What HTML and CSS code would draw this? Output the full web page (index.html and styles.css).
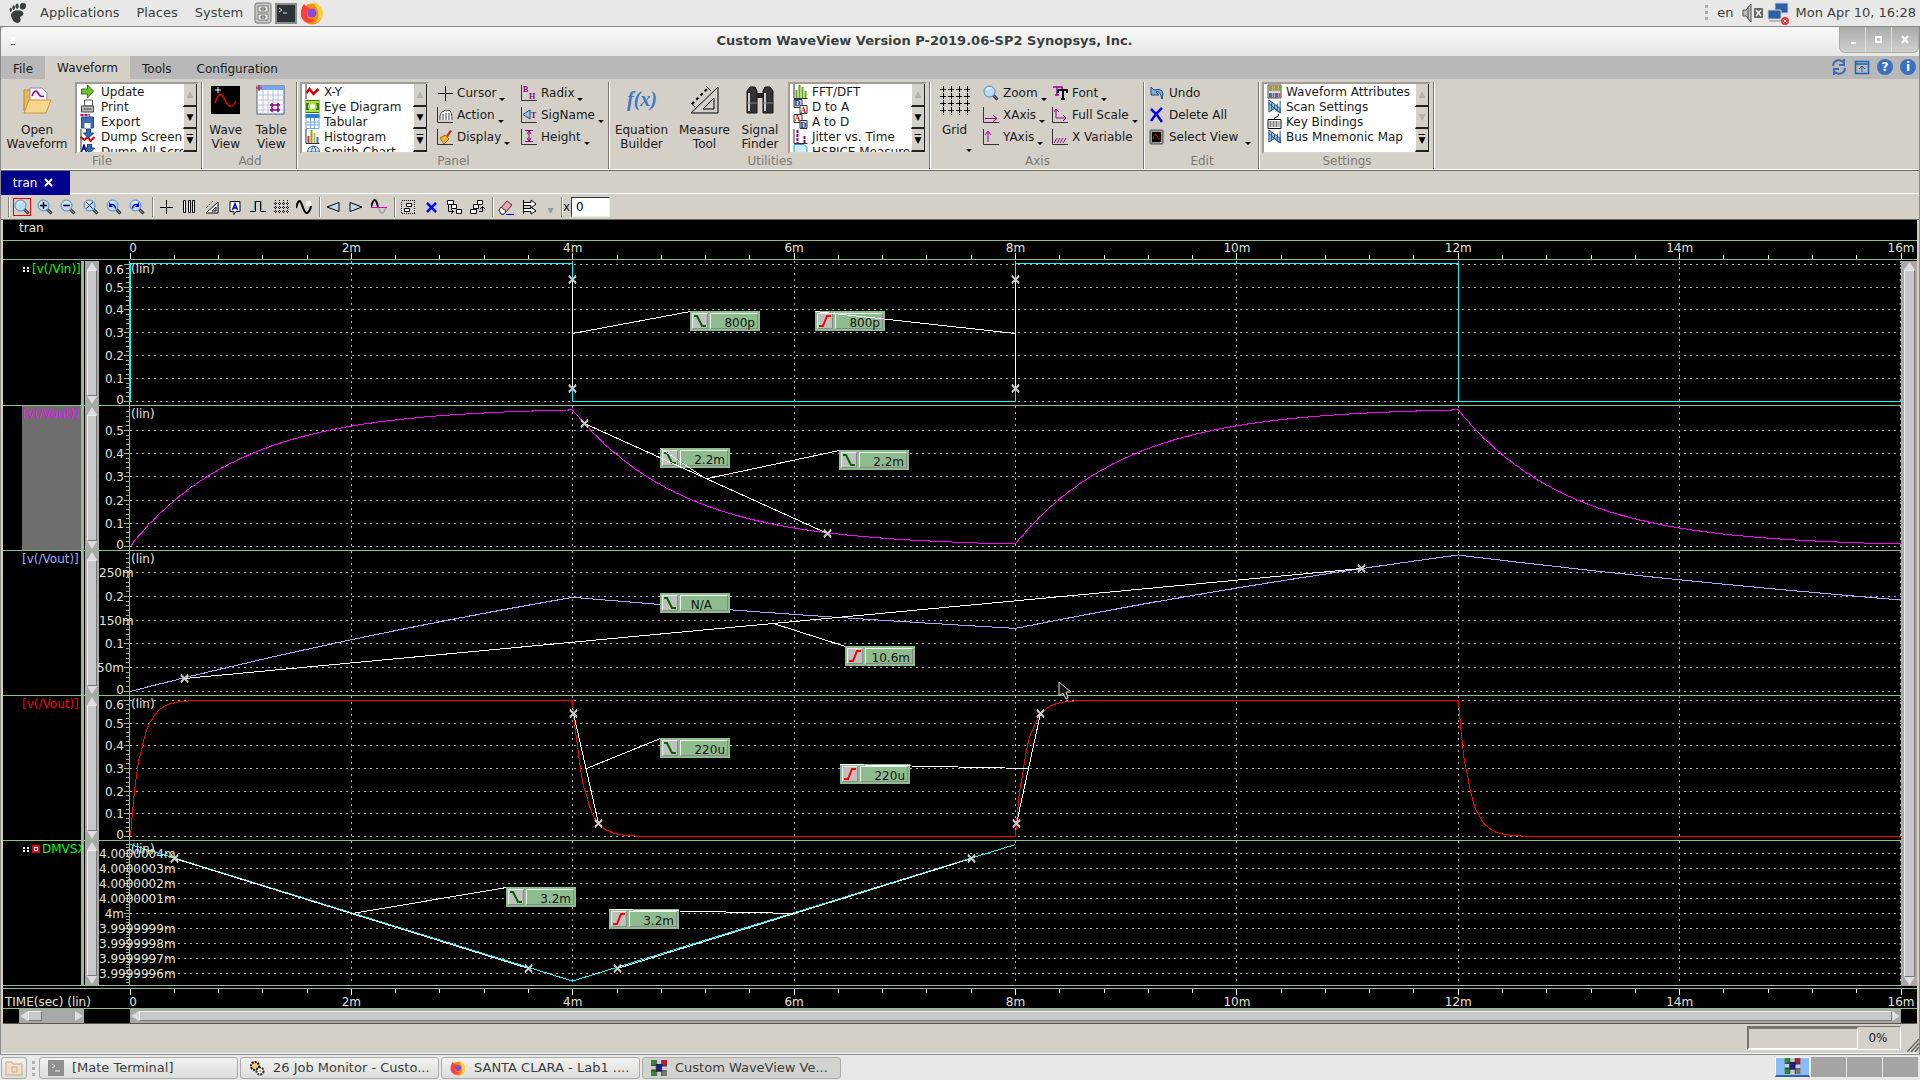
FILE: index.html
```html
<!DOCTYPE html>
<html lang="en">
<head>
<meta charset="utf-8">
<title>Custom WaveView Version P-2019.06-SP2 Synopsys, Inc.</title>
<link rel="stylesheet" href="styles.css">
</head>
<body>
<svg class="sprite" aria-hidden="true">
  <symbol id="i-lens" viewBox="0 0 16 16"><path d="M10 10l4.500 4.500" stroke="#222" stroke-width="3"/><path d="M10 10l4 4" stroke="#6f7f8c" stroke-width="1.500"/><circle cx="6.500" cy="6.500" r="5.500" fill="#b8dcfa" stroke="#4f86b8"/><path d="M3 5q2-3 5-2" stroke="#fff" fill="none"/></symbol>
  <symbol id="i-graph" viewBox="0 0 16 16"><path d="M.5 0v15.500H16" fill="none" stroke="#333"/></symbol>
  <symbol id="i-firefox" viewBox="0 0 24 24"><circle cx="12" cy="13" r="10.500" fill="#ff8a16"/><path d="M13 0q9 5 10 12-1 8-8 10 5-5 3-12-2-4-5-10z" fill="#ffd33a"/><path d="M1 10q1-5 3-7 2 3 6 4l-3 5q0 7 8 7-6 5-11 1-4-4-3-10z" fill="#ff3f3a"/><circle cx="12" cy="12" r="4.500" fill="#7b4fd8"/></symbol>
  <symbol id="i-flow" viewBox="0 0 16 16"><path d="M2.500 6v6.500h5M5 10l2.500 2.500L5 15" stroke="#000" fill="none"/><path d="M1.500 1.500h6v4h-6zM10.500 10.500h5v4h-5zM5.500 5.500h5v4h-5z" fill="#fff" stroke="#000"/></symbol>
  <symbol id="i-dump" viewBox="0 0 14 15"><rect width="14" height="15" fill="#fff"/><path d="M0 8l4 3 3-3 3 4 4-4" stroke="#d00" stroke-width="2" fill="none"/><path d="M6 0h4v4h3l-5 5-5-5h3z" fill="#2f6fb5" stroke="#17406e"/><path d="M.5 0v15" stroke="#333"/></symbol>
  <symbol id="i-dumpall" viewBox="0 0 14 15"><rect width="14" height="15" fill="#fff"/><path d="M1 8l2.500-7L6 8M2 5h3" stroke="#00a" stroke-width="1.500" fill="none"/><path d="M7 0h4v4h3l-5 5-4-5h2z" fill="#2f6fb5" stroke="#17406e"/><path d="M.5 0v15" stroke="#333"/></symbol>
  <symbol id="i-scan" viewBox="0 0 16 16"><path d="M2 1l12 9v5L8 10 2 14z" fill="#9cc6e6" stroke="#1d4c78"/><path d="M14 2v13L2 5" fill="none" stroke="#1d4c78"/><path d="M5 4v8M8 6v4M11 5v7" stroke="#1d4c78"/></symbol>
  <symbol id="i-wave" viewBox="0 0 24 24"><rect width="24" height="24" fill="#777"/><path d="M0 0h8v8H0zM0 16h8v8H0z" fill="#2c8a3a"/><path d="M16 0h8v8h-8z" fill="#b02030"/><path d="M8 6h9v11H8z" fill="#1c1c9c"/><path d="M8 0h8v6H8zM16 10h8v6h-8zM8 18h8v6H8zM0 9h7v5H0z" fill="#ccc"/><path d="M8 0v24M16 0v24M0 8h24M0 16h24" stroke="#222"/></symbol>
</svg>

<header class="desk-panel">
  <nav class="desk-menu">
    <svg class="foot" viewBox="0 0 20 24"><path d="M14 1q5-1 5 3 0 4-4 4-3 0-3-3 0-3 2-4z"/><ellipse cx="9" cy="4.500" rx="1.800" ry="3"/><ellipse cx="5.200" cy="6" rx="1.500" ry="2.600"/><ellipse cx="2" cy="8.500" rx="1.300" ry="2.300"/><path d="M2 14q2-5 8-5 6 0 6 4 0 2-3 3-2 1 0 3 0 4-4 4-5 0-7-9z"/></svg>
    <a href="#">Applications</a><a href="#">Places</a><a href="#">System</a>
  </nav>
  <div class="launchers">
    <svg width="18" height="22" viewBox="0 0 18 22"><rect x="1" y="1" width="16" height="20" rx="2" fill="#c9c9c4" stroke="#777"/><path d="M4 4h10v6H4zM4 12h10v6H4z" fill="#eee" stroke="#777"/><path d="M7 6h4v2H7zM7 14h4v2H7z" fill="none" stroke="#555"/></svg>
    <svg width="22" height="21" viewBox="0 0 22 21"><rect x="1" y="1" width="20" height="19" fill="#2c3336" stroke="#8a8d8a" stroke-width="2"/><path d="M4 5l3 2-3 2M8 10h4" stroke="#ddd" fill="none"/></svg>
    <svg width="24" height="24"><use href="#i-firefox"/></svg>
  </div>
  <div class="tray">
    <i class="grip"></i><span>en</span>
    <svg width="22" height="20" viewBox="0 0 22 20"><path d="M1 7h3l5-6v18l-5-6H1z" fill="#bbb" stroke="#555"/><path d="M6 4v12" stroke="#555"/><rect x="12" y="5" width="9" height="10" rx="1" fill="#666"/><path d="M14 7l5 6M19 7l-5 6" stroke="#fff" stroke-width="1.500"/></svg>
    <svg width="24" height="24" viewBox="0 0 24 24"><path d="M9 2h13v10H9z" fill="#2c5fa8" stroke="#ccc"/><path d="M2 9h13v9H2z" fill="#2c5fa8" stroke="#ccc"/><path d="M3 20h12" stroke="#bbb" stroke-width="2"/><circle cx="19" cy="20" r="4" fill="#e33b3b"/><path d="M17.500 18.500l3 3M20.500 18.500l-3 3" stroke="#fff"/></svg>
    <time>Mon Apr 10, 16:28</time>
  </div>
</header>

<main class="window">
  <div class="titlebar">
    <button class="sysmenu" aria-label="Window menu"></button>
    <h1>Custom WaveView Version P-2019.06-SP2 Synopsys, Inc.</h1>
    <div class="winbtns">
      <button aria-label="Minimize"><svg width="10" height="12"><path d="M3 10h5" stroke="#fff" stroke-width="2"/></svg></button>
      <button aria-label="Maximize"><svg width="10" height="12"><path d="M2 4h5v5H2z" fill="none" stroke="#fff" stroke-width="2"/></svg></button>
      <button aria-label="Close"><svg width="10" height="12"><path d="M2 3l6 7M8 3l-6 7" stroke="#fff" stroke-width="2"/></svg></button>
    </div>
  </div>

  <nav class="tabs">
    <button>File</button><button class="on">Waveform</button><button>Tools</button><button>Configuration</button>
    <div class="tabicons">
      <svg width="16" height="18" viewBox="0 0 16 18"><path d="M2 8q0-5 6-6l5 2V1M13 1v6H8M14 10q0 5-6 6l-5-2v3M3 17v-6h5" fill="none" stroke="#3f6fb5" stroke-width="2"/></svg>
      <svg width="16" height="18" viewBox="0 0 16 18"><path d="M1.500 3.500h13v12h-13zM1 6h14" fill="none" stroke="#1b66b0" stroke-width="1.500"/><path d="M8 14V8M5 11l3-3 3 3" fill="none" stroke="#1b66b0"/></svg>
      <span class="round">?</span><span class="round">i</span>
    </div>
  </nav>

  <section class="ribbon">
    <div class="group g-file">
      <div class="gbody">
        <button class="big wide"><svg width="32" height="30" viewBox="0 0 32 30"><path d="M3 5h8l2 3h12v18H3z" fill="#e8b75a" stroke="#b98a35"/><path d="M9 3h12l5 5v12H9z" fill="#f4f6fa" stroke="#8892a8"/><path d="M11 11q3-8 6-3t6 3" stroke="#909" fill="none" stroke-width="1.500"/><path d="M3 28l5-13h22l-5 13z" fill="#f8d68c" stroke="#c9973d"/></svg>Open<br>Waveform</button>
        <div class="list">
          <div class="items">
            <button><svg viewBox="0 0 14 15"><path d="M1 5h6V1l6 6-6 7v-4H1z" fill="#6ec02c" stroke="#2f7a12"/></svg>Update</button>
            <button><svg viewBox="0 0 14 15"><path d="M4 1h8v6H4z" fill="#fff" stroke="#555"/><path d="M1 7h12v6H1z" fill="#bbb" stroke="#444"/><path d="M3 10h8" stroke="#444"/></svg>Print</button>
            <button><svg viewBox="0 0 14 15"><path d="M1 3h12v11H1z" fill="#3f6db0" stroke="#234a85"/><path d="M4 9h6v5H4z" fill="#fff"/><path d="M0 1h9" stroke="#b06" stroke-width="2" stroke-dasharray="3 1"/><path d="M9 0v7" stroke="#e33"/></svg>Export</button>
            <button><svg><use href="#i-dump"/></svg>Dump Screen</button>
            <button><svg><use href="#i-dumpall"/></svg>Dump All Screens</button>
          </div>
          <div class="spin"><button class="off">▲</button><button>▼</button><button class="more">▼</button></div>
        </div>
      </div>
      <h2>File</h2>
    </div>
    <div class="group g-add">
      <div class="gbody">
        <button class="big"><svg width="30" height="30" viewBox="0 0 30 30"><rect width="29" height="28" y="1" fill="#000"/><path d="M4 5h6M7 2v6" stroke="#fff"/><path d="M4 18q5-15 10-3t11 1" fill="none" stroke="#e00" stroke-width="1.500"/></svg>Wave<br>View</button>
        <button class="big"><svg width="30" height="30" viewBox="0 0 30 30"><rect x="1" y="1" width="27" height="28" fill="#fff" stroke="#3b5f9e"/><path d="M1 1h27v4H1z" fill="#7aa5f0"/><path d="M7 5v24M12 5v24M17 5v24M22 5v24M1 10h27M1 15h27M1 20h27M1 25h27" stroke="#b5c2da"/><path d="M0 3h6M3 0v6" stroke="#e00"/><path d="M16 18v9M22 18v9M14 20h10M14 25h10" stroke="#808" stroke-width="1.500"/></svg>Table<br>View</button>
      </div>
      <h2>Add</h2>
    </div>
    <div class="group g-panel">
      <div class="gbody">
        <div class="list">
          <div class="items">
            <button><svg viewBox="0 0 14 15"><path d="M.5 0v15" stroke="#333"/><path d="M1 9l3-4 4 5 5-5" stroke="#d00" stroke-width="2.500" fill="none"/></svg>X-Y</button>
            <button><svg viewBox="0 0 14 15"><path d="M0 1h14v13H0z" fill="#3e7a12"/><path d="M0 3h14M0 12h14" stroke="#a9e04a" stroke-width="2"/><circle cx="7" cy="7.500" r="3.500" fill="#fff" stroke="#a9e04a" stroke-width="2"/></svg>Eye Diagram</button>
            <button><svg viewBox="0 0 14 15"><path d="M.5.5h13v14H.5z" fill="#fff" stroke="#79a9d8"/><path d="M0 0h14v4H0z" fill="#2a82cc"/><path d="M5 4v11M9 4v11M0 8h14M0 11h14" stroke="#79a9d8"/></svg>Tabular</button>
            <button><svg viewBox="0 0 14 15"><path d="M.5 0v14.500H14" fill="none" stroke="#333"/><path d="M2 7h2v7H2z" fill="#d33"/><path d="M5 1h2v13H5z" fill="#7a3"/><path d="M8 4h2v10H8z" fill="#da3"/><path d="M11 8h2v6h-2z" fill="#37c"/></svg>Histogram</button>
            <button><svg viewBox="0 0 14 15"><circle cx="8" cy="8" r="6" fill="#def" stroke="#369"/><path d="M2 8h12M8 2q-4 6 0 12M8 2q5 6 0 12" stroke="#369" fill="none"/></svg>Smith Chart</button>
          </div>
          <div class="spin"><button class="off">▲</button><button>▼</button><button class="more">▼</button></div>
        </div>
        <div class="smalls c84">
          <button class="dd"><svg viewBox="0 0 16 16"><path d="M8.500 1v15M1 8.500h15" stroke="#000"/></svg>Cursor</button>
          <button class="dd"><svg viewBox="0 0 16 16"><use href="#i-graph"/><path d="M3 13V9q1-5 4-5l1-1 2 1 2-1 1 1q2 1 2 9" fill="#fff" stroke="#444"/><path d="M6 7v6M9 6v7M12 6v7" stroke="#444"/></svg>Action</button>
          <button class="dd"><svg viewBox="0 0 16 16"><use href="#i-graph"/><path d="M13 1l2 1-4 6-2-1z" fill="#b33"/><path d="M3 9l5-3 4 4-5 5z" fill="#f0b030" stroke="#a66a10"/></svg>Display</button>
        </div>
        <div class="smalls c84">
          <button class="dd"><svg viewBox="0 0 16 16"><use href="#i-graph"/><text x="2" y="7" class="ic">B</text><text x="8" y="14" class="ic">H</text></svg>Radix</button>
          <button class="dd"><svg viewBox="0 0 16 16"><use href="#i-graph"/><path d="M9 3v9L2 7.500z" fill="#9cc6e6" stroke="#1d4c78"/><text x="10" y="11" class="ic">T</text></svg>SigName</button>
          <button class="dd"><svg viewBox="0 0 16 16"><use href="#i-graph"/><path d="M4 1.500h8M4 12.500h8M8 2v10M6 5l2-3 2 3M6 9l2 3 2-3" fill="none" stroke="#808"/></svg>Height</button>
        </div>
      </div>
      <h2>Panel</h2>
    </div>
    <div class="group g-util">
      <div class="gbody">
        <button class="big mid"><svg width="32" height="30" viewBox="0 0 32 30"><text x="1" y="21" class="fx">f(x)</text></svg>Equation<br>Builder</button>
        <button class="big mid"><svg width="30" height="30" viewBox="0 0 30 30"><path d="M1 28L28 2v26zM13 24l11-11v11z" fill="none" stroke="#000"/><path d="M2 19L19 2" stroke="#000" stroke-width="2" stroke-dasharray="3 3"/><path d="M1 18l4 4M16 1l5 5" stroke="#000"/></svg>Measure<br>Tool</button>
        <button class="big"><svg width="30" height="30" viewBox="0 0 30 30"><path d="M2 6l3-4h5l2 4v22H2zM18 6l2-4h5l3 4v22H18z" fill="#333" stroke="#111"/><path d="M4 8v18M20 8v18" stroke="#ccc" stroke-width="2"/><path d="M11 8h8v5h-8z" fill="#222"/><path d="M2 18h10M18 18h10" stroke="#888"/></svg>Signal<br>Finder</button>
        <div class="list">
          <div class="items">
            <button><svg viewBox="0 0 14 15"><path d="M.5 0v14.500H14" fill="none" stroke="#333"/><path d="M3 14V6M6 14V1M9 14V3M12 14V7" stroke="#6a2" stroke-width="2"/></svg>FFT/DFT</button>
            <button><svg viewBox="0 0 14 15"><path d="M.5.5h8v8h-8z" fill="#cde" stroke="#333"/><path d="M6.500 6.500h7v8h-7z" fill="#fff" stroke="#333"/><text x="1" y="7" class="ic blue">D</text><text x="7" y="14" class="ic red">A</text></svg>D to A</button>
            <button><svg viewBox="0 0 14 15"><path d="M.5.5h8v8h-8z" fill="#fff" stroke="#333"/><path d="M6.500 6.500h7v8h-7z" fill="#cde" stroke="#333"/><text x="1" y="7" class="ic red">A</text><text x="7" y="14" class="ic blue">D</text></svg>A to D</button>
            <button><svg viewBox="0 0 14 15"><path d="M.5 0v14.500H14" fill="none" stroke="#333"/><path d="M4 1v13M11 7v7" stroke="#808" stroke-width="2" stroke-dasharray="3 1"/></svg>Jitter vs. Time</button>
            <button><svg viewBox="0 0 14 15"><path d="M.5.500h10l3 3v11H.5z" fill="#cfeaf8" stroke="#3b9ccc"/><path d="M2 10h9" stroke="#124" stroke-width="2"/></svg>HSPICE Measure</button>
          </div>
          <div class="spin"><button class="off">▲</button><button>▼</button><button class="more">▼</button></div>
        </div>
      </div>
      <h2>Utilities</h2>
    </div>
    <div class="group g-axis">
      <div class="gbody">
        <button class="big one dd"><svg width="30" height="30" viewBox="0 0 30 30"><path d="M0 4.500h30M0 11.500h30M0 18.500h30M0 25.500h30" stroke="#000" stroke-dasharray="6 2"/><path d="M3.500 1v29M11.500 1v29M19.500 1v29M27.500 1v29" stroke="#000" stroke-dasharray="6 1"/></svg>Grid</button>
        <div class="smalls c70">
          <button class="dd"><svg><use href="#i-lens"/></svg>Zoom</button>
          <button class="dd"><svg viewBox="0 0 16 16"><use href="#i-graph"/><path d="M2 11.500h12M10 8l4 3.500-4 3" fill="none" stroke="#909"/></svg>XAxis</button>
          <button class="dd"><svg viewBox="0 0 16 16"><use href="#i-graph"/><path d="M5 13V2M2 6l3-4 3 4" fill="none" stroke="#909"/></svg>YAxis</button>
        </div>
        <div class="smalls c88">
          <button class="dd"><svg viewBox="0 0 16 16"><path d="M1 2h9v3M5 2v8M3 10h4" fill="none" stroke="#909" stroke-width="1.500"/><path d="M6 5h9v3M11 5v9M9 14h4M6 5v3" fill="none" stroke="#000" stroke-width="2"/></svg>Font</button>
          <button class="dd"><svg viewBox="0 0 16 16"><use href="#i-graph"/><path d="M4 2v9h10M2 5l2-3 3 3M11 8l3 3-3 3" fill="none" stroke="#909"/></svg>Full Scale</button>
          <button><svg viewBox="0 0 16 16"><use href="#i-graph"/><path d="M2 14l3-5M5 14l3-5M8 14l3-5M11 14l3-5" stroke="#909"/></svg>X Variable</button>
        </div>
      </div>
      <h2>Axis</h2>
    </div>
    <div class="group g-edit">
      <div class="gbody">
        <div class="smalls">
          <button><svg viewBox="0 0 16 16"><path d="M2 2v8h8L7 7q4-2 6 7 4-12-8-9z" fill="#7fb2d8" stroke="#1d4c78"/></svg>Undo</button>
          <button><svg viewBox="0 0 16 16"><path d="M2 2q6 5 11 13M13 1Q6 7 2 14" fill="none" stroke="#00e" stroke-width="2.500"/></svg>Delete All</button>
          <button class="dd late"><svg viewBox="0 0 16 16"><rect x="1" y="1" width="13" height="14" rx="1" fill="#999" stroke="#555"/><path d="M3 3h9v10H3z"/><path d="M4 10q2-8 4-3t3 2" stroke="#e00" fill="none"/></svg>Select View</button>
        </div>
      </div>
      <h2>Edit</h2>
    </div>
    <div class="group g-set">
      <div class="gbody">
        <div class="list">
          <div class="items">
            <button><svg viewBox="0 0 14 15"><path d="M.5 1h13v13H.5z" fill="#ddd" stroke="#555"/><path d="M3 2v5M9 2v5" stroke="#c83" stroke-width="3"/><path d="M6 2v5M12 2v5" stroke="#7a3" stroke-width="2"/><path d="M3 9v5M9 9v5" stroke="#37c" stroke-width="3"/><path d="M6 9v5M12 9v5" stroke="#c55" stroke-width="2"/></svg>Waveform Attributes</button>
            <button><svg><use href="#i-scan"/></svg>Scan Settings</button>
            <button><svg viewBox="0 0 14 15"><path d="M.5 5.500h13v9H.5z" fill="#fff" stroke="#000"/><path d="M2 8h10M2 10h10M2 12h10" stroke="#000" stroke-dasharray="2 1"/><path d="M7 5q0-2 2-2t2-3" fill="none" stroke="#000"/></svg>Key Bindings</button>
            <button><svg><use href="#i-scan"/></svg>Bus Mnemonic Map</button>
          </div>
          <div class="spin"><button class="off">▲</button><button class="off">▼</button><button class="more">▼</button></div>
        </div>
      </div>
      <h2>Settings</h2>
    </div>
  </section>

  <div class="doctabs"><button>tran <svg width="9" height="9"><path d="M1 1l7 7M8 1l-7 7" stroke="#fff" stroke-width="2"/></svg></button></div>

  <div class="toolbar">
    <div class="set">
      <button class="sel" aria-label="Zoom area"><svg><use href="#i-lens"/></svg></button>
      <button aria-label="Zoom in"><svg viewBox="0 0 16 16"><use href="#i-lens"/><path d="M3 6.500h7M6.500 3v7" stroke="#000" stroke-width="1.500"/></svg></button>
      <button aria-label="Zoom out"><svg viewBox="0 0 16 16"><use href="#i-lens"/><path d="M3 6.500h7" stroke="#000" stroke-width="1.500"/></svg></button>
      <button aria-label="Zoom fit"><svg viewBox="0 0 16 16"><use href="#i-lens"/><path d="M3 3l7 7M10 3l-7 7" stroke="#000" stroke-dasharray="4 1"/></svg></button>
      <button aria-label="Zoom undo"><svg viewBox="0 0 16 16"><use href="#i-lens"/><path d="M9.500 9.500Q9 5 5 5.500" fill="none" stroke="#00e" stroke-width="1.500"/><path d="M3 3v5h4z" fill="#00e"/></svg></button>
      <button aria-label="Zoom redo"><svg viewBox="0 0 16 16"><use href="#i-lens"/><path d="M3.500 9.500Q4 5 8 5.500" fill="none" stroke="#00e" stroke-width="1.500"/><path d="M10 3v5H6z" fill="#00e"/></svg></button>
    </div>
    <div class="set">
      <button aria-label="Cursor"><svg viewBox="0 0 16 16"><path d="M8.500 1v14M2 8.500h13" stroke="#000"/></svg></button>
      <button aria-label="Vertical cursors"><svg viewBox="0 0 16 16"><path d="M2.500 1.500h2v12h-2zM7.500 1.500h2v12h-2zM11.500 1.500h2v12h-2z" fill="#fff" stroke="#000"/></svg></button>
      <button aria-label="Measure"><svg viewBox="0 0 16 16"><path d="M2 14L14 3v11zM8 12l4-4v4z" fill="#fff" stroke="#000"/><path d="M2 9l7-7" stroke="#000" stroke-dasharray="2 2"/></svg></button>
      <button aria-label="Annotate"><svg viewBox="0 0 16 16"><path d="M3 2.500h10v10H9l-2 3v-3H3z" fill="#fff" stroke="#000"/><path d="M5.500 11L8 4.500l2.500 6.500M6 9h4" stroke="#00c" stroke-width="1.500" fill="none"/></svg></button>
      <button aria-label="Pulse"><svg viewBox="0 0 16 16"><path d="M0 12.500h5.500v-10h5v10H16" fill="none" stroke="#000"/><path d="M4.500 2v9M11.500 2v9" stroke="#5aa"/></svg></button>
      <button aria-label="Grid"><svg viewBox="0 0 16 16"><path d="M2.500 1v14M6.500 1v14M10.500 1v14M14.500 1v14M1 4.500h15M1 8.500h15M1 12.500h15" stroke="#000" stroke-dasharray="1 1" shape-rendering="crispEdges"/></svg></button>
      <button aria-label="Signal"><svg viewBox="0 0 16 16"><path d="M0 9q3-12 6-3t5 8q3-1 4-7" fill="none" stroke="#000" stroke-width="2"/><path d="M10 2h5v5h-5z" fill="#fff"/></svg></button>
    </div>
    <div class="set">
      <button aria-label="Previous"><svg viewBox="0 0 16 16"><path d="M14 3.500v9L2 8z" fill="#bcd8f0" stroke="#000"/></svg></button>
      <button aria-label="Next"><svg viewBox="0 0 16 16"><path d="M2 3.500v9L14 8z" fill="#bcd8f0" stroke="#000"/></svg></button>
      <button aria-label="Crossing"><svg viewBox="0 0 16 16"><path d="M0 8q4-14 7 0" fill="none" stroke="#000" stroke-width="2"/><path d="M7 8q4 12 8 0" fill="none" stroke="#aaa" stroke-width="2"/><path d="M0 8.500h16" stroke="#d0c"/></svg></button>
    </div>
    <div class="set">
      <button aria-label="Group"><svg viewBox="0 0 16 16"><path d="M1.500 1.500h13v13h-13z" fill="none" stroke="#000" stroke-dasharray="1 1" shape-rendering="crispEdges"/><path d="M6.500 4.500h5v3h-5zM4.500 9.500h5v3h-5z" fill="#fff" stroke="#000"/></svg></button>
      <button aria-label="Delete"><svg viewBox="0 0 16 16"><path d="M4 4l9 9M13 4l-9 9" stroke="#00e" stroke-width="2.500"/></svg></button>
      <button aria-label="Expand"><svg><use href="#i-flow"/></svg></button>
      <button aria-label="Collapse"><svg viewBox="0 0 16 16"><path d="M8.500 1.500h5v4h-5zM4.500 5.500h5v4h-5zM1.500 10.500h6v4h-6z" fill="#fff" stroke="#000"/><path d="M10 12.500h3.500V8M11 10l2.500-2.500L16 10" fill="none" stroke="#000"/></svg></button>
    </div>
    <div class="set last">
      <button aria-label="Erase"><svg viewBox="0 0 16 16"><path d="M1 11l8-9 5 4-8 9H3z" fill="#f2a0b4" stroke="#333"/><path d="M1 11l2-3 5 4-2 3H3z" fill="#fff" stroke="#333"/><path d="M8 15.500h8" stroke="#00c"/></svg></button>
      <button aria-label="Route"><svg viewBox="0 0 16 16"><path d="M2.500 1v14M2.500 3.500H10V1l5 4-5 4V6.500H2.500M2.500 9.500H10V8l5 4-5 3v-2.500H2.500" fill="#fff" stroke="#000"/></svg></button>
      <button aria-label="More" class="dim">▾</button>
    </div>
    <div class="set xbox"><label for="xval">x</label><input id="xval" value="0"></div>
  </div>

  <section class="waves">
    <div class="wname">tran</div>
    <div class="xrow top"><svg class="xaxis" data-side="top"></svg></div>
    <div class="wbody">
      <div class="panels" id="panels">
        <div class="panel"><div class="sig green"><i class="dots"></i><span>[v(/Vin)]</span></div></div>
        <div class="panel"><div class="sig magenta picked"><span>[v(/Vout)]</span></div></div>
        <div class="panel"><div class="sig blue"><span>[v(/Vout)]</span></div></div>
        <div class="panel"><div class="sig red"><span>[v(/Vout)]</span></div></div>
        <div class="panel"><div class="sig green"><i class="dots"></i><i class="redbox"></i><span>DMVSX</span></div></div>
      </div>
      <div class="vbar"><i class="up"></i><i class="thumb"></i><i class="down"></i></div>
    </div>
    <div class="xrow bottom"><span class="unit">TIME(sec) (lin)</span><svg class="xaxis" data-side="bottom"></svg></div>
    <div class="hrow">
      <div class="hbar short"><i class="left"></i><i class="thumb"></i><i class="right"></i></div>
      <div class="hbar"><i class="left"></i><i class="thumb"></i><i class="right"></i></div>
    </div>
    <svg class="pointer" width="14" height="20" viewBox="0 0 14 20"><path d="M1 1v14l4-3 3 6 2-1-2-6h5z" fill="#111" stroke="#ddd"/></svg>
  </section>

  <footer class="status">
    <div class="progress"><span class="bar"></span><span class="pct">0%</span></div>
    <svg width="12" height="13" viewBox="0 0 12 13"><path d="M0 13L12 0M4 13l8-9M8 13l4-5" stroke="#666" stroke-width="1.500"/></svg>
  </footer>
</main>

<footer class="taskbar">
  <button class="showdesk" aria-label="Show desktop"><svg width="18" height="16" viewBox="0 0 18 16"><path d="M1 2h6l1 2h9v11H1z" fill="#f2dfc6" stroke="#c9a98a"/><path d="M7 7h5v5H7z" fill="none" stroke="#c9a98a"/></svg></button>
  <i class="grip"></i>
  <button class="task"><svg width="16" height="16" viewBox="0 0 16 16"><rect width="16" height="16" fill="#8e908e"/><path d="M4 4l3 2-3 2M7 11h5" stroke="#eee" fill="none"/></svg>[Mate Terminal]</button>
  <button class="task"><svg width="16" height="16" viewBox="0 0 16 16"><circle cx="6" cy="6" r="4" fill="#f0c878" stroke="#111" stroke-width="2" stroke-dasharray="2 1"/><circle cx="11" cy="11" r="3.500" fill="#fff" stroke="#222" stroke-width="2" stroke-dasharray="2 1"/><circle cx="11" cy="11" r="1" fill="#d80"/></svg>26 Job Monitor - Custo...</button>
  <button class="task"><svg width="16" height="16"><use href="#i-firefox"/></svg>SANTA CLARA - Lab1 ....</button>
  <button class="task on"><svg width="16" height="16"><use href="#i-wave"/></svg>Custom WaveView Ve...</button>
  <div class="pager"><button class="on" aria-label="Workspace 1"><svg width="17" height="16" viewBox="0 0 24 24"><use href="#i-wave"/></svg></button><button aria-label="Workspace 2"></button><button aria-label="Workspace 3"></button><button aria-label="Workspace 4"></button></div>
</footer>
<script src="plots.js"></script>
</body>
</html>
```
FILE: styles.css
```css
* { box-sizing: border-box; }
html { background: #1d3c50; }
body { margin: 0; min-height: 100vh; display: flex; flex-direction: column; font: 12px/14px "DejaVu Sans", sans-serif; color: #1a1a1a; background: #e8e8e6; overflow-x: hidden; }
button { font: inherit; color: inherit; border: 0; background: none; padding: 0; margin: 0; }
button svg { flex: none; }
h1, h2 { margin: 0; font-size: inherit; }
.sprite { position: absolute; width: 0; height: 0; }

.desk-panel { height: 27px; display: flex; align-items: center; background: #e8e8e6; border-bottom: 1px solid #8a8a86; font-size: 13px; color: #3a3f3f; }
.desk-menu { display: flex; align-items: center; gap: 17px; padding-left: 9px; }
.desk-menu a { color: inherit; text-decoration: none; }
.foot { width: 18px; height: 22px; fill: #3a3f3f; margin-right: -4px; }
.launchers { display: flex; align-items: center; gap: 3px; margin-left: 11px; }
.tray { display: flex; align-items: center; gap: 6px; margin-left: auto; padding-right: 4px; }
.tray svg:first-of-type { margin-left: 2px; margin-right: -4px; }
.grip { width: 3px; height: 16px; background: repeating-linear-gradient(#b0b0ac 0 3px, transparent 3px 6px); margin-right: 3px; }

.window { background: #d4d0c8; border-left: 1px solid #8a8a86; border-right: 1px solid #8a8a86; }
.titlebar { height: 29px; display: flex; align-items: flex-start; background: linear-gradient(#f8f8f7, #e6e6e5); border-radius: 5px 5px 0 0; }
.titlebar h1 { flex: 1; font-size: 13px; line-height: 28px; text-align: center; color: #3a3f3f; padding-right: 5px; }
.sysmenu { width: 4px; height: 8px; background: #fff; border-bottom: 1px solid #555; margin: 10px 0 0 10px; }
.winbtns { display: flex; height: 26px; border: 1px solid #a8aaa8; border-top: 0; border-radius: 0 0 6px 6px; background: linear-gradient(#a9aba9, #cfd0cf); }
.winbtns button { width: 26px; padding-top: 2px; border-right: 1px solid #ddd; }
.winbtns button:last-child { border: 0; }

.tabs { height: 23px; display: flex; background: #b8b8b8; }
.tabs button { padding: 2px 12px 0; }
.tabs button:first-child { padding-right: 12px; }
.tabs button:nth-child(4) { padding-left: 13px; }
.tabs .on { background: #d4d0c8; padding-top: 0; }
.tabicons { margin-left: auto; display: flex; align-items: center; gap: 7px; padding: 0 3px 2px 0; }
.round { width: 16px; height: 16px; border-radius: 50%; background: #3b6fc4; color: #fff; font-weight: bold; line-height: 16px; text-align: center; }

.ribbon { height: 92px; padding-top: 3px; display: flex; border-bottom: 1px solid #6e6b66; box-shadow: inset 0 -1px #fff; }
.group { height: 87px; display: flex; flex-direction: column; border-right: 1px solid #7a7771; box-shadow: 1px 0 #fff; padding: 0 2px 0 1px; }
.gbody { display: flex; height: 72px; }
.group h2 { font-weight: normal; color: #7e7a74; text-align: center; line-height: 14px; padding-left: 3px; }
.g-file { width: 201px; } .g-add { width: 95px; } .g-panel { width: 312px; }
.g-util { width: 321px; } .g-axis { width: 214px; } .g-edit { width: 115px; } .g-set { width: 175px; }
.big { width: 48px; display: flex; flex-direction: column; align-items: center; line-height: 14px; text-align: center; padding-top: 3px; }
.big svg { margin-bottom: 8px; }
.big.wide { width: 73px; padding-right: 3px; }
.big.mid { width: 63px; }
.g-util .big { white-space: nowrap; }
.g-util .list { margin-left: 4px; }
.big.one { position: relative; width: 47px; margin-right: 5px; }
.big.one::after { position: absolute; right: 6px; bottom: 2px; }
.list { flex: 1; display: flex; height: 72px; border: 2px solid #a09d94; border-right-color: #d8d5cd; border-bottom-color: #d8d5cd; background: #fff; }
.g-panel .list { flex: none; width: 129px; margin: 0 8px 0 2px; }
.g-set .list { margin-left: 2px; }
.items { flex: 1; width: 0; overflow: hidden; }
.items button { display: flex; align-items: center; gap: 6px; height: 15px; padding-left: 3px; white-space: nowrap; }
.items svg { width: 15px; height: 15px; }
.g-panel .items button, .g-util .items button, .g-set .items button { gap: 4px; }
.spin { width: 14px; display: flex; flex-direction: column; background: #d4d0c8; }
.spin button { flex: 1; font-size: 9px; line-height: 20px; border-right: 1px solid #222; border-bottom: 2px solid #222; border-left: 1px solid #fff; color: #000; }
.spin .off { color: #b5b1a9; }
.spin .more { text-decoration: overline; }
.smalls { display: flex; flex-direction: column; }
.smalls button { display: flex; align-items: center; gap: 4px; height: 22px; white-space: nowrap; }
.smalls svg { width: 16px; height: 16px; }
.dd::after { content: ""; border: 3px solid transparent; border-top: 3px solid #000; border-bottom: 0; margin: 12px 0 0 -1px; }
.late::after { margin-left: 3px; }
.c84 { width: 84px; } .c70 { width: 69px; } .c88 { width: 88px; }
.g-edit .smalls { padding-left: 4px; }
.ic { font: bold 8px "Liberation Serif", serif; fill: #808; }
.ic.blue { fill: #136; } .ic.red { fill: #c00; }
.fx { font: italic bold 20px "Liberation Serif", serif; fill: #3b78c8; }

.doctabs { height: 23px; border-bottom: 1px solid #fff; }
.doctabs button { height: 24px; width: 69px; padding-right: 5px; position: relative; background: #00008c; color: #fff; }
.doctabs svg { margin-left: 3px; }
.toolbar { height: 26px; display: flex; align-items: center; padding-left: 7px; border-bottom: 1px solid #6e6b66; }
.set { display: flex; height: 20px; border-left: 1px solid #85827b; box-shadow: inset 1px 0 #fff; padding: 0 4px 0 1px; }
.set > button { width: 23px; display: grid; place-items: center; }
.set svg { width: 16px; height: 16px; }
.set .sel svg { outline: 1px solid #e00; }
.set.last { padding-right: 0; }
.set .dim { width: 21px; color: #999; align-self: end; }
.xbox { align-items: center; }
.xbox input { width: 39px; height: 20px; margin-left: 1px; padding: 0 4px; font: inherit; border: 1px solid; border-color: #333 #eee #eee #333; border-radius: 0; background: #fff; }

.waves { position: relative; margin: 0 2px; background: #000; color: #e4e4d8; border-bottom: 1px solid #555; }
.wname { height: 21px; padding: 1px 16px; border-bottom: 1px solid #8fbc8f; line-height: 14px; }
.xrow { position: relative; height: 20px; padding: 0 16px 0 127px; }
.xrow.top { height: 19px; border-bottom: 1px solid #8fbc8f; }
.xrow.bottom { height: 21px; margin-top: 2px; border: solid #8fbc8f; border-width: 1px 0; }
.xaxis { display: block; width: 100%; height: 18px; overflow: visible; fill: #e4e4d8; }
.xaxis text { text-anchor: middle; }
.xaxis line { stroke: #fff; shape-rendering: crispEdges; }
.unit { position: absolute; left: 2px; top: 6px; }
.wbody { display: flex; padding-top: 1px; }
.panels { flex: 1; border-right: 1px solid #8fbc8f; }
.panel { height: 145px; display: grid; grid-template-columns: 82px 14px 31px 1fr; border-bottom: 1px solid #8fbc8f; }
.sig { display: flex; align-items: flex-start; gap: 2px; margin-left: 19px; width: 62px; border-right: 3px solid #8fbc8f; overflow: hidden; white-space: nowrap; padding-top: 1px; line-height: 14px; }
.picked { background: #6e6e6e; }
.green { color: #0f0; } .magenta { color: #f0f; } .blue { color: #a8a8ff; } .red { color: #f00; }
.dots { flex: none; width: 6px; height: 5px; margin: 5px 1px 0; background: linear-gradient(90deg, #fff 2px, transparent 2px 4px, #fff 4px) 0 0 / 6px 2px no-repeat, linear-gradient(90deg, #fff 2px, transparent 2px 4px, #fff 4px) 0 3px / 6px 2px no-repeat; }
.redbox { flex: none; width: 8px; height: 8px; margin-top: 3px; background: #22c; border: 2px solid #e00; outline: 1px solid #fff; outline-offset: -3px; }
.vbar { width: 14px; display: flex; flex-direction: column; background: #a8a8a8; padding: 1px 2px; }
.wbody > .vbar { width: 15px; }
.hbar { display: flex; flex: 1; height: 14px; background: #a8a8a8; padding: 2px 1px; }
.hbar.short { flex: none; width: 65px; margin: 0 46px 0 0; }
.hrow { display: flex; padding: 0 16px 0 16px; }
.thumb { flex: 1; background: #c8c8c8; border: 1px solid; border-color: #eee #777 #777 #eee; }
.short .thumb { flex: none; width: 14px; margin-right: auto; }
.up, .down { height: 8px; background: #ddd; }
.left, .right { width: 8px; background: #ddd; }
.up { clip-path: polygon(50% 0, 100% 100%, 0 100%); }
.down { clip-path: polygon(0 0, 100% 0, 50% 100%); }
.left { clip-path: polygon(0 50%, 100% 0, 100% 100%); }
.right { clip-path: polygon(0 0, 100% 50%, 0 100%); }
.yaxis { display: block; width: 31px; height: 144px; overflow: visible; fill: #e4e4d8; position: relative; z-index: 1; }
.yaxis line { stroke: #8fbc8f; shape-rendering: crispEdges; }
.yaxis .end { text-anchor: end; }
.plot { position: relative; height: 144px; }
.plot > svg { position: absolute; inset: 0; width: 100%; height: 100%; overflow: visible; fill: none; shape-rendering: crispEdges; }
.plot line, .plot path { vector-effect: non-scaling-stroke; }
.grid line { stroke: #b0b0b0; stroke-dasharray: 2 4; }
.leads { stroke: #fff; pointer-events: none; }
.leads .mark { stroke: #c8c8c8; stroke-width: 2; shape-rendering: auto; }
.lin { position: absolute; left: 1px; top: 1px; line-height: 14px; }
.flag { position: absolute; display: flex; gap: 2px; width: 70px; height: 20px; padding: 2px; background: #8fbc8f; color: #111; }
.flag svg { width: 16px; height: 16px; background: #c0c0c0; border: 1px solid; border-color: #eee #888 #888 #eee; fill: none; stroke-width: 2; }
.flag span { flex: 1; border: 1px solid; border-color: #f0f0f0 #888 #888 #f0f0f0; text-align: right; padding: 2px 2px 0 0; line-height: 14px; }
.flag.na span { padding-right: 15px; }
.pointer { position: absolute; left: 1056px; left: calc(55% + 2px); top: 461px; z-index: 2; }

.status { height: 31px; display: flex; align-items: flex-end; justify-content: flex-end; border-bottom: 1px solid #8a8a86; box-shadow: inset 0 -1px #f4f4f4; padding-bottom: 2px; }
.progress { display: flex; width: 154px; height: 24px; margin: 0 6px 2px 0; border: 1px solid; border-color: #77746e #fff #fff #77746e; }
.bar { width: 110px; border: 1px solid; border-width: 2px 1px 1px; border-color: #77746e #fff #fff #77746e; }
.pct { flex: 1; text-align: center; line-height: 23px; padding-right: 2px; }

.taskbar { flex: 1; min-height: 25px; display: flex; align-items: flex-start; gap: 2px; padding: 2px 2px 0 1px; font-size: 13px; color: #3a3f3f; }
.taskbar .grip { margin: 4px 2px 0 3px; height: 15px; }
.showdesk, .task { display: flex; align-items: center; height: 22px; border: 1px solid #a9aba8; border-radius: 3px; background: linear-gradient(#f2f2f1, #dcdcda); }
.showdesk { width: 26px; justify-content: center; }
.task { width: 199px; padding-left: 8px; gap: 8px; white-space: nowrap; }
.task.on { background: #d2d2cf; }
.pager { margin-left: auto; display: flex; gap: 1px; }
.pager button { width: 35px; height: 20px; background: #a4a5a0; }
.pager .on { background: #86bdf8; border: 1px solid #fff; border-bottom: 2px solid #3a63a0; }
```
FILE: plots.js
```js
const NS = 'http://www.w3.org/2000/svg';
const W = 1771, H = 144;
const px = t => Math.floor(t * W / 16) + 0.5;

function el(tag, attrs, parent, text) {
  const n = document.createElementNS(NS, tag);
  for (const k in attrs) n.setAttribute(k, attrs[k]);
  if (text) n.textContent = text;
  parent.append(n);
  return n;
}

// time axes: 0 to 16 ms, five minor steps per 2 ms
document.querySelectorAll('.xaxis').forEach(svg => {
  const top = svg.dataset.side === 'top';
  for (let i = 0; i <= 40; i++) {
    const x = i * 2.5 + '%', len = i % 5 ? 4 : 6;
    el('line', { x1: x, x2: x, y1: top ? 18 - len : 0, y2: top ? 18 : len }, svg);
    if (i % 5 === 0) el('text', { x, dx: i ? 0 : 3, y: top ? 11 : 17 }, svg, i ? i * 2 / 5 + 'm' : '0');
  }
});

// RC response to the square wave, time constant in ms
function rc(tau) {
  const pts = [];
  let v = 0;
  for (let seg = 0; seg < 4; seg++) {
    const goal = seg % 2 ? 0 : 0.6, from = v;
    for (let t = 0; t <= 4.0001; t += 0.02) {
      v = goal + (from - goal) * Math.exp(-t / tau);
      pts.push([seg * 4 + t, v]);
    }
  }
  return pts;
}

const tenths = n => Array.from({ length: n + 1 }, (_, i) => [i / 10, i ? '0.' + i : '0']);
const panels = [
  { y0: 140, k: 229, color: '#0ff', ticks: tenths(6), step: 0.02,
    pts: [[0, 0], [0, .602], [4, .602], [4, 0], [8, 0], [8, .602], [12, .602], [12, 0], [16, 0]],
    marks: [[442, 18], [442, 127], [885, 18], [885, 127]],
    leads: [[442, 18, 442, 127], [885, 18, 885, 127], [442, 72, 560, 50], [685, 50, 885, 72]],
    flags: [[560, 50, 'fall', '800p'], [685, 50, 'rise', '800p']] },
  { y0: 140, k: 232, color: '#f0f', ticks: tenths(5), step: 0.02, pts: rc(1),
    marks: [[454, 17], [697, 127]],
    leads: [[454, 17, 697, 127], [530, 42, 575, 72], [577, 72, 709, 44]],
    flags: [[530, 42, 'fall', '2.2m'], [709, 44, 'fall', '2.2m']] },
  { y0: 140, k: 476, color: '#a8a8ff', step: 0.01, pts: rc(10),
    ticks: [[0, '0'], [.05, '50m'], [.1, '0.1'], [.15, '150m'], [.2, '0.2'], [.25, '250m']],
    marks: [[54, 127], [1231, 17]],
    leads: [[54, 127, 1231, 17], [643, 72, 715, 95]],
    flags: [[530, 42, 'fall', 'N/A'], [715, 95, 'rise', '10.6m']] },
  { y0: 140, k: 227, color: '#f00', ticks: tenths(6), step: 0.02, pts: rc(0.1),
    marks: [[443, 17], [468, 127], [886, 127], [910, 17]],
    leads: [[443, 17, 468, 127], [886, 127, 910, 17], [456, 72, 530, 42], [710, 68, 898, 72]],
    flags: [[530, 42, 'fall', '220u'], [710, 68, 'rise', '220u']] },
  { y0: 72, k: 15, color: '#0ff', step: 0.2, pts: [[0, 4.6], [4, -4.5], [8, 4.6]],
    ticks: [[4, '4.0000004m'], [3, '4.0000003m'], [2, '4.0000002m'], [1, '4.0000001m'], [0, '4m'],
      [-1, '3.9999999m'], [-2, '3.9999998m'], [-3, '3.9999997m'], [-4, '3.9999996m']],
    marks: [[44, 17], [398, 127], [487, 127], [841, 17]],
    leads: [[44, 17, 398, 127], [487, 127, 841, 17], [222, 72, 376, 46], [479, 68, 665, 72]],
    flags: [[376, 46, 'fall', '3.2m'], [479, 68, 'rise', '3.2m']] },
];

document.querySelectorAll('.panel').forEach((panel, n) => {
  const p = panels[n];
  const y = v => Math.round(p.y0 - v * p.k) + 0.5;

  const bar = document.createElement('div');
  bar.className = 'vbar';
  bar.innerHTML = '<i class="up"></i><i class="thumb"></i><i class="down"></i>';
  panel.append(bar);

  const ax = el('svg', { class: 'yaxis' }, panel);
  el('line', { x1: 30.5, x2: 30.5, y1: 0, y2: H }, ax);
  for (let i = -60; i < 60; i++) {
    const ty = y(i * p.step);
    if (ty > 2 && ty < H - 2) el('line', { x1: 27, x2: 30, y1: ty, y2: ty }, ax);
  }
  for (const [v, label] of p.ticks) {
    const ty = y(v), long = label.length > 3;
    el('line', { x1: 25, x2: 30, y1: ty, y2: ty }, ax);
    const ly = Math.min(Math.max(ty, 8), 138);
    el('text', { x: long ? 0 : 25, y: Math.floor(ly) + 5, class: long ? 'start' : 'end' }, ax, label);
  }

  const plot = document.createElement('div');
  plot.className = 'plot';
  panel.append(plot);
  const box = { viewBox: `0 0 ${W} ${H}`, preserveAspectRatio: 'none' };
  const base = el('svg', box, plot);
  const grid = el('g', { class: 'grid' }, base);
  for (const [v] of p.ticks) el('line', { x1: 0, x2: W, y1: y(v), y2: y(v) }, grid);
  for (let i = 1; i <= 8; i++) {
    const x = Math.min(px(i * 2), W - 0.5);
    el('line', { x1: x, x2: x, y1: 0, y2: H }, grid);
  }
  el('path', { stroke: p.color, d: 'M' + p.pts.map(([t, v]) =>
    px(t) + ' ' + (p.y0 - v * p.k + 0.5).toFixed(1)).join('L') }, base);

  const lin = document.createElement('span');
  lin.className = 'lin';
  lin.textContent = '(lin)';
  plot.append(lin);

  for (const [fx, fy, kind, text] of p.flags) {
    const f = document.createElement('div');
    f.className = 'flag' + (text === 'N/A' ? ' na' : '');
    f.style.left = fx / W * 100 + '%';
    f.style.top = fy + 'px';
    const rise = kind === 'rise';
    f.innerHTML = `<svg viewBox="0 0 14 14"><path stroke="${rise ? '#f00' : '#060'}" d="${rise ? 'M1 12h4L9 2h4' : 'M1 2h3l5 10h4'}"/></svg><span>${text}</span>`;
    plot.append(f);
  }

  const over = el('svg', { ...box, class: 'leads' }, plot);
  for (const [x1, y1, x2, y2] of p.leads) el('path', { d: `M${x1 + 0.5} ${y1 + 0.5}L${x2 + 0.5} ${y2 + 0.5}` }, over);
  for (const [x, yy] of p.marks) {
    el('path', { class: 'mark', d: `M${x - 3} ${yy - 3}l7 7m0-7l-7 7` }, over);
    el('path', { stroke: '#c8c8c8', d: `M${x - 2.5} ${yy - 4}v3M${x + 3.5} ${yy - 4}v3M${x - 2.5} ${yy + 5}v-3M${x + 3.5} ${yy + 5}v-3` }, over);
  }
});
```
